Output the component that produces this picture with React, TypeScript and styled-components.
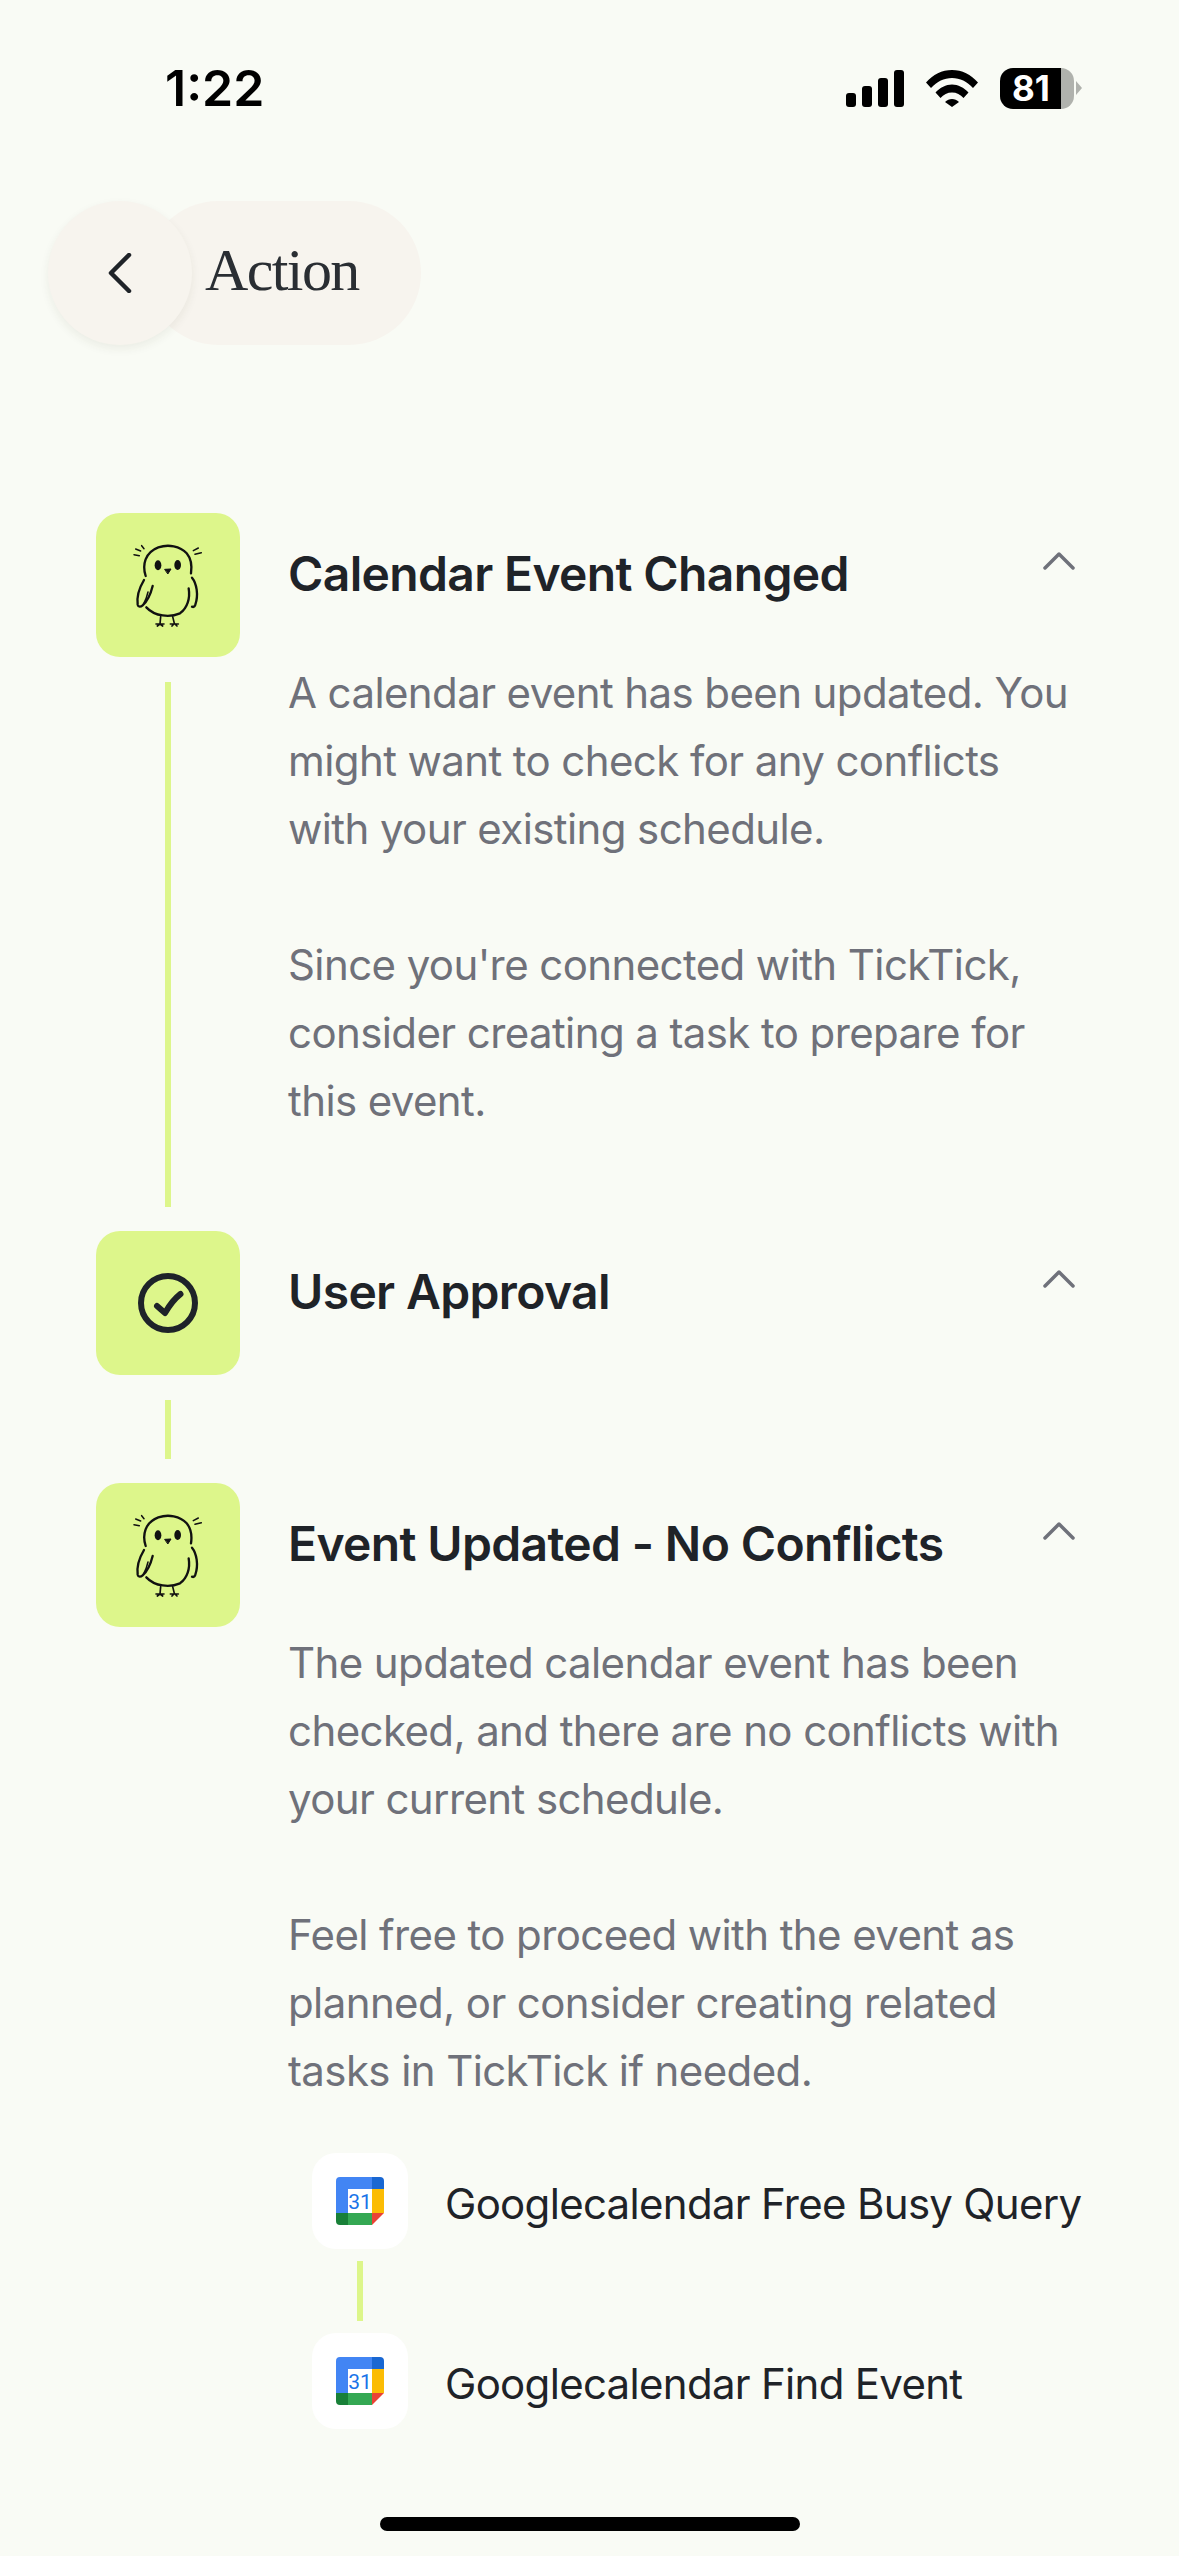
import React from 'react';
import styled, { createGlobalStyle } from 'styled-components';

const GlobalStyle = createGlobalStyle`
  html, body {
    margin: 0;
    padding: 0;
    background: #f9fbf5;
  }
`;

const Page = styled.div`
  width: 1179px;
  height: 2556px;
  box-sizing: border-box;
  display: flex;
  flex-direction: column;
  overflow: hidden;
  background: #f9fbf5;
  font-family: Inter, 'Noto Sans', sans-serif;
  color: #1f2328;
`;

const StatusBar = styled.div`
  height: 60px;
  margin-top: 58px;
  padding: 0 105px 0 165px;
  display: flex;
  align-items: center;
  justify-content: space-between;
`;

const Time = styled.div`
  font-size: 50px;
  line-height: 60px;
  font-weight: 600;
  color: #000;
`;

const StatusIcons = styled.div`
  display: flex;
  align-items: center;
  gap: 22px;
`;

const Battery = styled.div`
  width: 74px;
  height: 41px;
  border-radius: 13px;
  background: linear-gradient(90deg, #000 0 83%, #b0b2ad 83% 100%);
  color: #fff;
  font-size: 35px;
  line-height: 41px;
  font-weight: 700;
  text-align: center;
  padding-right: 12px;
  box-sizing: border-box;
  position: relative;
  &::after {
    content: '';
    position: absolute;
    right: -8px;
    top: 13px;
    border-left: 6px solid #b0b2ad;
    border-top: 7px solid transparent;
    border-bottom: 7px solid transparent;
  }
`;

const Header = styled.div`
  margin: 83px 0 0 48px;
  display: flex;
  align-items: center;
`;

const BackButton = styled.div`
  width: 144px;
  height: 144px;
  border-radius: 50%;
  background: #f7f4ee;
  box-shadow: 0 4px 10px rgba(60, 50, 30, 0.07);
  display: flex;
  align-items: center;
  justify-content: center;
  position: relative;
  z-index: 1;
`;

const HeaderPill = styled.div`
  width: 275px;
  height: 144px;
  box-sizing: border-box;
  margin-left: -46px;
  padding: 0 0 5px 59px;
  border-radius: 72px;
  background: #f7f4ee;
  display: flex;
  align-items: center;
  font-family: 'Liberation Serif', serif;
  font-size: 60px;
  letter-spacing: -1.6px;
  color: #2a2e33;
`;

const Timeline = styled.div`
  margin: 168px 0 0 96px;
  display: flex;
  flex-direction: column;
`;

const Step = styled.div`
  display: flex;
  gap: 48px;
`;

const Rail = styled.div`
  width: 144px;
  flex: none;
  display: flex;
  flex-direction: column;
  align-items: center;
`;

const IconBox = styled.div`
  width: 144px;
  height: 144px;
  flex: none;
  border-radius: 24px;
  background: #ddf68b;
  display: flex;
  align-items: center;
  justify-content: center;
`;

const Connector = styled.div`
  width: 6px;
  flex: 1;
  margin: 25px 0 24px;
  background: #ddf68b;
`;

const StepContent = styled.div<{ $minHeight: number }>`
  width: 790px;
  min-height: ${(props) => props.$minHeight}px;
  padding-top: 31px;
  box-sizing: border-box;
`;

const TitleRow = styled.div`
  display: flex;
  justify-content: space-between;
`;

const Title = styled.div`
  font-size: 48px;
  line-height: 60px;
  font-weight: 600;
  letter-spacing: -0.65px;
  color: #1f2328;
`;

const Chevron = styled.svg`
  width: 32px;
  height: 18px;
  margin: 8px 3px 0 0;
`;

const Body = styled.div`
  margin-top: 55px;
  font-size: 42px;
  line-height: 68px;
  letter-spacing: -0.6px;
  color: #6f717a;
`;

const Paragraph = styled.p`
  margin: 0 0 68px;
  &:last-child {
    margin-bottom: 0;
  }
`;

const ToolList = styled.div`
  margin: 48px 0 0 24px;
  display: flex;
  flex-direction: column;
`;

const ToolRow = styled.div`
  display: flex;
  gap: 37px;
  height: 96px;
  align-items: center;
`;

const ToolIcon = styled.div`
  width: 96px;
  height: 96px;
  flex: none;
  border-radius: 24px;
  background: #fff;
  display: flex;
  align-items: center;
  justify-content: center;
`;

const ToolName = styled.div`
  font-size: 42px;
  line-height: 60px;
  margin-top: 6px;
  letter-spacing: -0.7px;
  white-space: nowrap;
  color: #1f2328;
`;

const ToolLink = styled.div`
  width: 6px;
  height: 60px;
  margin: 12px 0 12px 45px;
  background: #ddf68b;
`;

const HomeBar = styled.div`
  width: 420px;
  height: 14px;
  flex: none;
  margin: auto auto 25px;
  border-radius: 7px;
  background: #000;
`;

function SignalIcon() {
  return (
    <svg width="58" height="37" viewBox="0 0 58 37">
      <rect x="0" y="23" width="10" height="14" rx="3" />
      <rect x="16" y="16" width="10" height="21" rx="3" />
      <rect x="32" y="8" width="10" height="29" rx="3" />
      <rect x="48" y="0" width="10" height="37" rx="3" />
    </svg>
  );
}

function WifiIcon() {
  return (
    <svg width="52" height="37" viewBox="0 0 52 37">
      <path d="M0 12.5C7 4.5 16 0 26 0s19 4.5 26 12.5l-5 5.5C41 11.5 34 8 26 8S11 11.5 5 18z" />
      <path d="M9.5 22.5C14 17.5 20 14.5 26 14.5s12 3 16.5 8l-5 5.5C34.5 24.5 30.5 22.5 26 22.5s-8.5 2-11.5 5.5z" />
      <path d="M19 32c2-2 4.5-3 7-3s5 1 7 3l-7 5z" />
    </svg>
  );
}

function BirdIcon() {
  return (
    <svg width="144" height="144" viewBox="48 39 432 432" fill="none" stroke="#111" strokeWidth="7" strokeLinecap="round" strokeLinejoin="round">
      <path d="M197 228C186 195 195 157 235 142C265 132 300 138 320 160C335 178 336 200 333 220" />
      <ellipse cx="234" cy="196" rx="10" ry="15" fill="#111" stroke="none" />
      <ellipse cx="293" cy="195" rx="10" ry="15" fill="#111" stroke="none" />
      <path d="M255 208L273 207L264 221Z" fill="#111" strokeWidth="3" />
      <path d="M192 240C180 260 170 290 173 314C175 322 182 321 188 316C201 305 212 282 218 258" />
      <path d="M190 313C196 303 201 290 204 276" strokeWidth="4.5" />
      <path d="M336 233C350 250 356 285 346 314C343 321 340 322 336 320" />
      <path d="M326 265C331 295 322 325 300 340C270 353 225 350 199 322" />
      <path d="M242 350L240 372M228 372H252M240 372L232 378M240 372L248 378" strokeWidth="5" />
      <path d="M278 350L283 370M271 372H295M283 370L276 378M283 370L291 378" strokeWidth="5" />
      <path d="M167 147L182 153M185 137L192 146M162 164L178 167M340 152L355 144M345 163L364 158" strokeWidth="4.5" />
    </svg>
  );
}

function ApprovalIcon() {
  return (
    <svg width="60" height="60" viewBox="0 0 60 60" fill="none" stroke="#1e2329" strokeLinecap="round" strokeLinejoin="round">
      <circle cx="30" cy="30" r="27" strokeWidth="6" />
      <path d="M19 33L27 40C31 33 36 26 42.5 21" strokeWidth="6" />
    </svg>
  );
}

function CalendarIcon() {
  return (
    <svg width="48" height="48" viewBox="0 0 48 48">
      <path d="M36 0H4a4 4 0 0 0-4 4v32h12V12h24z" fill="#4285f4" />
      <path d="M36 0h8a4 4 0 0 1 4 4v8H36z" fill="#1967d2" />
      <rect x="12" y="12" width="24" height="24" fill="#fff" />
      <rect x="36" y="12" width="12" height="24" fill="#fbbc04" />
      <rect x="12" y="36" width="24" height="12" fill="#34a853" />
      <path d="M0 36h12v12H4a4 4 0 0 1-4-4z" fill="#188038" />
      <path d="M36 36h12L36 48z" fill="#ea4335" />
      <text x="24" y="31.5" textAnchor="middle" fontFamily="Roboto, sans-serif" fontSize="21" fill="#1a73e8">31</text>
    </svg>
  );
}

function ChevronUp() {
  return (
    <Chevron viewBox="0 0 32 18" fill="none" stroke="#6f717a" strokeWidth="3.5" strokeLinecap="round" strokeLinejoin="round">
      <path d="M2 16L16 2L30 16" />
    </Chevron>
  );
}

function App() {
  return (
    <Page>
      <GlobalStyle />
      <StatusBar>
        <Time>1:22</Time>
        <StatusIcons>
          <SignalIcon />
          <WifiIcon />
          <Battery>81</Battery>
        </StatusIcons>
      </StatusBar>
      <Header>
        <BackButton>
          <svg width="24" height="40" viewBox="0 0 24 40" fill="none" stroke="#1f2328" strokeWidth="4.5" strokeLinecap="round" strokeLinejoin="round">
            <path d="M21 2L3 20L21 38" />
          </svg>
        </BackButton>
        <HeaderPill>Action</HeaderPill>
      </Header>
      <Timeline>
        <Step>
          <Rail>
            <IconBox>
              <BirdIcon />
            </IconBox>
            <Connector />
          </Rail>
          <StepContent $minHeight={718}>
            <TitleRow>
              <Title>Calendar Event Changed</Title>
              <ChevronUp />
            </TitleRow>
            <Body>
              <Paragraph>A calendar event has been updated. You might want to check for any conflicts with your existing schedule.</Paragraph>
              <Paragraph>Since you're connected with TickTick, consider creating a task to prepare for this event.</Paragraph>
            </Body>
          </StepContent>
        </Step>
        <Step>
          <Rail>
            <IconBox>
              <ApprovalIcon />
            </IconBox>
            <Connector />
          </Rail>
          <StepContent $minHeight={252}>
            <TitleRow>
              <Title>User Approval</Title>
              <ChevronUp />
            </TitleRow>
          </StepContent>
        </Step>
        <Step>
          <Rail>
            <IconBox>
              <BirdIcon />
            </IconBox>
          </Rail>
          <StepContent $minHeight={0}>
            <TitleRow>
              <Title>Event Updated - No Conflicts</Title>
              <ChevronUp />
            </TitleRow>
            <Body>
              <Paragraph>The updated calendar event has been checked, and there are no conflicts with your current schedule.</Paragraph>
              <Paragraph>Feel free to proceed with the event as planned, or consider creating related tasks in TickTick if needed.</Paragraph>
            </Body>
            <ToolList>
              <ToolRow>
                <ToolIcon>
                  <CalendarIcon />
                </ToolIcon>
                <ToolName>Googlecalendar Free Busy Query</ToolName>
              </ToolRow>
              <ToolLink />
              <ToolRow>
                <ToolIcon>
                  <CalendarIcon />
                </ToolIcon>
                <ToolName>Googlecalendar Find Event</ToolName>
              </ToolRow>
            </ToolList>
          </StepContent>
        </Step>
      </Timeline>
      <HomeBar />
    </Page>
  );
}

export default App;
